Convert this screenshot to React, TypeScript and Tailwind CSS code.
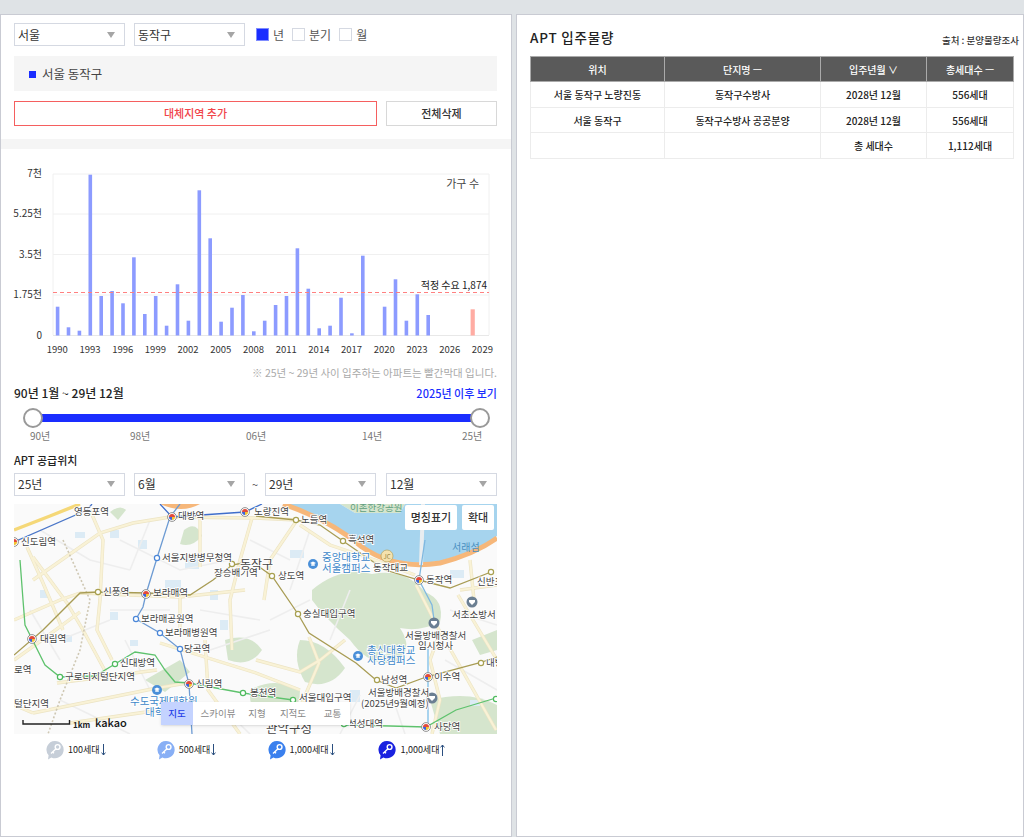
const bars: [number, number][] = [
  [0, 306.7], [1, 327.3], [2, 330.7], [3, 174.7], [4, 296], [5, 291], [6, 303.3], [7, 257.3], [8, 314],
  [9, 296], [10, 325.7], [11, 284.3], [12, 320.7], [13, 190.3], [14, 238.3], [15, 321.7], [16, 307.7],
  [17, 295], [18, 331.3], [19, 320.7], [20, 305], [21, 296], [22, 248.3], [23, 288.7], [24, 328.3],
  [25, 325.7], [26, 297.7], [27, 333.3], [28, 255.7], [30, 306.7], [31, 279.3], [32, 320.7], [33, 294.3],
  [34, 315],
];

const yearLabels = ['1990', '1993', '1996', '1999', '2002', '2005', '2008', '2011', '2014', '2017', '2020', '2023', '2026', '2029'];

const tableRows = [
  ['서울 동작구 노량진동', '동작구수방사', '2028년 12월', '556세대'],
  ['서울 동작구', '동작구수방사 공공분양', '2028년 12월', '556세대'],
  ['', '', '총 세대수', '1,112세대'],
];

// x, y (middle of the text), text; page coordinates, the map svg's viewBox uses the same numbers
const mapLabels: [number, number, string][] = [
  [74, 512, '영등포역'], [21, 542, '신도림역'], [178, 516, '대방역'], [254, 512, '노량진역'],
  [301, 520, '노들역'], [348, 540, '흑석역'], [373, 568, '동작대교'], [426, 580, '동작역'],
  [477, 582, '신반포'], [452, 615, '서초소방서'], [405, 636, '서울방배경찰서'], [418, 646, '임시청사'],
  [434, 677, '이수역'], [381, 680, '남성역'], [368, 693, '서울방배경찰서'], [361, 704, '(2025년9월예정)'],
  [434, 727, '사당역'], [348, 724, '석성대역'], [162, 558, '서울지방병무청역'], [214, 573, '장승배기역'],
  [278, 576, '상도역'], [303, 614, '숭실대입구역'], [103, 592, '신풍역'], [153, 593, '보라매역'],
  [141, 619, '보라매공원역'], [165, 633, '보라매병원역'], [184, 649, '당곡역'], [120, 663, '신대방역'],
  [65, 677, '구로디지털단지역'], [196, 684, '신림역'], [40, 639, '대림역'], [14, 670, '로역'],
  [14, 704, '털단지역'], [250, 693, '봉천역'], [299, 698, '서울대입구역'], [486, 663, '내방'],
];

const mapBlueLabels: [number, number, string][] = [
  [322, 558, '중앙대학교'], [322, 569, '서울캠퍼스'], [367, 651, '총신대학교'], [367, 661, '사당캠퍼스'],
  [130, 702, '수도국제대학원'], [145, 713, '대학'],
];

const stations: [number, number][] = [
  [172, 517], [245, 512], [146, 594], [32, 639], [189, 684], [419, 580], [428, 677], [426, 727], [14, 542],
];

const rings: [number, number, string][] = [
  [296, 520, '#a8a050'], [343, 541, '#a8a050'], [272, 576, '#a8a050'], [298, 614, '#a8a050'], [98, 592, '#a8a050'],
  [232, 564, '#a8a050'], [377, 680, '#a8a050'], [481, 663, '#a8a050'], [491, 572, '#a8a050'],
  [157, 558, '#4a86d8'], [136, 619, '#4a86d8'], [160, 633, '#4a86d8'], [180, 649, '#4a86d8'],
  [115, 664, '#4fbb5f'], [60, 677, '#4fbb5f'], [243, 693, '#4fbb5f'], [293, 700, '#4fbb5f'], [344, 724, '#4fbb5f'], [496, 699, '#4fbb5f'],
];

const mainRoads = [
  'M33 580 L100 533 L133 523 L170 517 L255 518 L297 520',
  'M90 510 L103 540 L100 600 L97 630 L112 660',
  'M33 557 L67 603 L83 630 L110 680',
  'M27 547 L43 583 L63 630',
  'M200 517 L200 567',
  'M80 593 L180 597 L245 590',
  'M180 597 L180 630',
  'M33 713 L157 688 L187 683',
  'M57 683 L157 670',
  'M70 723 L160 710',
  'M160 643 L256 673 L300 690',
  'M14 620 L60 600 L80 593',
  'M14 660 L42 640 L80 612',
  'M252 518 L240 560 L230 600 L232 650',
  'M297 520 L270 560 L264 600',
  'M309 637 L319 663 L299 710 L295 734',
  'M449 647 L496 730',
  'M416 585 L440 632 L430 660 L440 700 L432 734',
  'M458 595 L497 660',
  'M470 560 L474 600',
  'M415 575 L375 560 L330 545 L300 525',
  'M256 660 L300 672 L320 660 L345 640',
  'M14 705 L33 713',
  'M205 640 L208 690 L240 734',
  'M460 590 L497 585',
];

const minorRoads = [
  'M40 530 L90 560 L130 570', 'M120 540 L180 570 L230 560', 'M110 610 L170 610', 'M60 640 L110 620',
  'M125 640 L150 690', 'M200 610 L260 620', 'M210 650 L270 630', 'M270 620 L310 600', 'M250 540 L290 560',
  'M310 530 L290 590', 'M350 590 L330 640', 'M450 610 L497 625', 'M445 660 L497 690', 'M360 695 L340 734',
  'M390 690 L405 734', 'M150 520 L130 570', 'M60 700 L130 734', 'M215 700 L250 734', 'M30 610 L60 660',
];

function SelectBox({ label, className }: { label: string; className: string }) {
  return (
    <div className={`flex h-[23px] items-center justify-between border border-[#d5d9e2] bg-white pl-[3px] pr-[9px] text-xs text-[#333] ${className}`}>
      <span>{label}</span>
      <span className="h-0 w-0 border-x-[4px] border-t-[6px] border-x-transparent border-t-[#a5a5a5]" />
    </div>
  );
}

function CheckItem({ label, checked }: { label: string; checked?: boolean }) {
  return (
    <div className="flex items-center gap-[4px] text-xs text-[#555]">
      {checked ? (
        <span className="h-[13px] w-[13px] border border-[#7f8cff] bg-[#1a2dff]" />
      ) : (
        <span className="h-[13px] w-[13px] border border-[#d5d9e2] bg-white" />
      )}
      <span>{label}</span>
    </div>
  );
}

function Chart() {
  return (
    <svg viewBox="1 150 510 215" className="mt-[1px] block h-[215px] w-[510px]">
      {[174, 214, 254.5, 295].map((y) => (
        <line key={y} x1="53" x2="489" y1={y} y2={y} stroke="#f0f0f0" />
      ))}
      <line x1="53" x2="53" y1="174" y2="335" stroke="#f0f0f0" />
      <line x1="489" x2="489" y1="174" y2="335" stroke="#f0f0f0" />
      <line x1="53" x2="489" y1="335.5" y2="335.5" stroke="#e8e8e8" />
      {bars.map(([i, top]) => (
        <rect key={i} x={55.8 + i * 10.9} y={top} width="3.6" height={335.5 - top} fill="#8c9bff" />
      ))}
      <rect x="470.6" y="309.3" width="4.2" height="26.2" fill="#ffaca3" />
      <line x1="53" x2="489" y1="292.5" y2="292.5" stroke="#ff8080" strokeDasharray="4 3" />
      <g fontSize="10" fill="#333" textAnchor="end">
        <text x="42" y="177">7천</text>
        <text x="42" y="217">5.25천</text>
        <text x="42" y="258">3.5천</text>
        <text x="42" y="298">1.75천</text>
        <text x="42" y="339">0</text>
      </g>
      <g fontSize="9.5" fill="#333" textAnchor="middle">
        {yearLabels.map((year, i) => (
          <text key={year} x={57.3 + i * 32.7} y="353">{year}</text>
        ))}
      </g>
      <text x="479" y="188" fontSize="11" fill="#444" textAnchor="end">가구 수</text>
      <text x="487" y="289" fontSize="10" fill="#222" textAnchor="end">적정 수요 1,874</text>
    </svg>
  );
}

function MapDrawing() {
  return (
    <svg viewBox="14 504 483 230" className="absolute inset-0 h-full w-full" preserveAspectRatio="none">
      <rect x="14" y="504" width="483" height="230" fill="#fafafa" />

      {/* green areas */}
      <g fill="#d5e5cd">
        <path d="M312 590 Q340 566 372 574 Q405 568 425 592 Q445 600 440 622 Q420 632 400 628 Q415 650 395 662 Q370 668 350 640 Q325 618 312 600 Z" />
        <path d="M300 640 Q325 640 345 668 Q330 690 305 682 Q292 660 300 640 Z" />
        <path d="M225 640 Q250 632 262 650 Q250 668 228 660 Z" />
        <path d="M250 690 Q275 676 300 690 Q300 720 270 722 Q248 715 250 690 Z" />
        <path d="M430 700 Q470 690 497 705 L497 734 L440 734 Z" />
        <path d="M184 530 Q196 520 202 536 Q192 548 180 544 Z" />
        <path d="M110 512 Q120 504 126 510 L118 520 Z" />
        <path d="M340 504 L405 504 L400 513 L355 513 Z" />
        <path d="M145 680 L180 660 L190 672 L165 692 Z" />
        <path d="M472 640 L497 630 L497 650 L480 655 Z" />
      </g>

      {/* river */}
      <path d="M283 504 Q330 518 362 545 Q395 568 440 561 Q475 552 497 536 L497 504 L405 504 L400 513 L355 513 L340 504 Z" fill="#a6d4ee" />

      {/* small blue blocks */}
      <g fill="#dcebf5">
        <rect x="75" y="532" width="10" height="6" />
        <rect x="138" y="540" width="9" height="9" />
        <rect x="185" y="555" width="14" height="14" />
        <rect x="165" y="580" width="16" height="10" />
        <rect x="110" y="612" width="8" height="8" />
        <rect x="40" y="590" width="8" height="8" />
        <rect x="290" y="550" width="14" height="8" />
        <rect x="450" y="570" width="14" height="8" />
        <rect x="220" y="620" width="8" height="10" />
        <rect x="350" y="690" width="10" height="12" />
        <rect x="470" y="700" width="10" height="6" />
        <rect x="65" y="635" width="7" height="7" />
        <rect x="130" y="640" width="8" height="6" />
        <rect x="210" y="590" width="8" height="10" />
        <rect x="110" y="530" width="9" height="8" />
      </g>

      <g fill="none" stroke="#eeeeee" strokeWidth="1.6">
        {minorRoads.map((d) => (
          <path key={d} d={d} />
        ))}
      </g>
      <g fill="none" stroke="#ece4c4" strokeWidth="3.4">
        {mainRoads.map((d) => (
          <path key={d} d={d} />
        ))}
      </g>
      <g fill="none" stroke="#f9f2d6" strokeWidth="2.2">
        {mainRoads.map((d) => (
          <path key={d} d={d} />
        ))}
      </g>
      <path d="M63 540 L90 600 L80 650 L60 700 L48 734" fill="none" stroke="#cfc8b4" strokeWidth="1.6" strokeDasharray="2 2" />
      <path d="M14 530 L50 516 L80 504" fill="none" stroke="#f5d878" strokeWidth="3.4" />
      <path d="M283 504 Q330 520 362 547 Q395 570 440 563 Q475 554 497 538" fill="none" stroke="#f6b77a" strokeWidth="5" />
      <path d="M160 504 Q182 514 200 504 Z" fill="#f6b77a" />
      <path d="M423 504 L421 565" fill="none" stroke="#e9edf0" strokeWidth="4" />

      {/* subway lines */}
      <g fill="none" strokeWidth="1.3">
        <path d="M14 542 L87 510 L92 504" stroke="#4a76c8" />
        <path d="M160 504 L172 517 L245 512 L262 504" stroke="#3f6ecb" />
        <path d="M180 504 L170 517 L157 558 L146 594 L143 607 L136 619 L160 633 L180 649 L189 684 L192 734" stroke="#6d9bd3" />
        <path d="M20 560 L23 600 L25 625 L32 639 L45 665 L60 677 L95 676 L115 664 L135 652 L155 655 L165 670 L175 682 L189 683 L243 693 L293 700 M344 725 L390 726 L426 727 L456 710 L496 698" stroke="#5ec26d" />
        <path d="M43 630 L80 593 L98 592 L147 593 L190 595 L213 580 L232 565 L243 563" stroke="#a89c54" />
        <path d="M14 655 L43 630" stroke="#a89c54" />
        <path d="M258 566 L272 576 L298 614 L309 633 L356 663 L376 680 L396 688 L426 677 L479 663 L497 657" stroke="#a89c54" />
        <path d="M256 516 L296 520 L320 525 L343 541 L385 570 L419 580 L450 588 L491 572" stroke="#a89c54" />
        <path d="M419 580 L425 540 M419 580 L432 605 L434 620" stroke="#7fb8e0" />
      </g>
      <path d="M428 647 L428 727" fill="none" stroke="#a8d3ee" strokeWidth="2" />

      {/* station markers */}
      {rings.map(([x, y, c]) => (
        <circle key={`${x}-${y}`} cx={x} cy={y} r="2.6" fill="#fff" stroke={c} strokeWidth="1.2" />
      ))}
      {stations.map(([x, y]) => (
        <g key={`${x}-${y}`}>
          <circle cx={x} cy={y} r="4.4" fill="#fff" stroke="#777" strokeWidth="0.8" />
          <path d={`M${x - 3} ${y} A3 3 0 0 1 ${x + 3} ${y} Z`} fill="#e24a3b" />
          <path d={`M${x - 3} ${y} A3 3 0 0 0 ${x} ${y + 3} L${x} ${y} Z`} fill="#3d63d8" />
          <path d={`M${x} ${y + 3} A3 3 0 0 0 ${x + 3} ${y} L${x} ${y} Z`} fill="#f2c230" />
        </g>
      ))}

      {/* school icons */}
      {[[313, 564], [358, 656], [157, 690]].map(([x, y]) => (
        <g key={x}>
          <circle cx={x} cy={y} r="5" fill="#4a8fd8" />
          <path d={`M${x - 3} ${y - 1} L${x} ${y - 2.5} L${x + 3} ${y - 1} L${x} ${y + 0.5} Z M${x - 1.8} ${y + 0.3} V${y + 1.8} H${x + 1.8} V${y + 0.3}`} fill="#fff" />
        </g>
      ))}
      {/* police / fire icons */}
      {[[472, 602], [434, 623], [432, 698]].map(([x, y]) => (
        <g key={x}>
          <circle cx={x} cy={y} r="5.5" fill="#6b7f92" />
          <path d={`M${x - 3} ${y - 2} H${x + 3} V${y} L${x} ${y + 3} L${x - 3} ${y} Z`} fill="#fff" />
        </g>
      ))}
      <circle cx="387" cy="556" r="6" fill="#f5e2ad" stroke="#b5a25c" strokeWidth="0.7" />
      <text x="387" y="559" fontSize="6" fill="#8f7f40" textAnchor="middle">JC</text>

      {/* labels */}
      <g fontSize="9.5" fill="#444" stroke="#fff" strokeWidth="1.6" paintOrder="stroke">
        {mapLabels.map(([x, y, t]) => (
          <text key={`${t}-${x}`} x={x} y={y + 3}>{t}</text>
        ))}
        <text x="240" y="569" fontSize="12">동작구</text>
      </g>
      <g fontSize="10.5" fill="#3d87c9" stroke="#fff" strokeWidth="1.6" paintOrder="stroke">
        {mapBlueLabels.map(([x, y, t]) => (
          <text key={`${t}-${x}`} x={x} y={y + 3}>{t}</text>
        ))}
      </g>
      <text x="350" y="511" fontSize="9.5" fill="#5f9f80">이촌한강공원</text>
      <text x="452" y="551" fontSize="10" fill="#4a8fc0">서래섬</text>
      <text x="289" y="733" fontSize="12.5" fill="#444" stroke="#fff" strokeWidth="1.6" paintOrder="stroke" textAnchor="middle">관악구청</text>

      {/* scale bar */}
      <path d="M23 720 V724 H69.5 V720" fill="none" stroke="#222" strokeWidth="1.4" />
      <text x="73" y="728" fontSize="8" fontWeight="700" fill="#222">1km</text>
      <text x="95" y="727" fontSize="11" fontWeight="500" fill="#111">kakao</text>
    </svg>
  );
}

function Pin({ color }: { color: string }) {
  return (
    <svg viewBox="0 0 20 20" className="h-[20px] w-[20px] shrink-0">
      <path d="M10 1a8.6 8.6 0 1 1-3.6 16.4L3 19.6l.6-4.4A8.6 8.6 0 0 1 10 1Z" fill={color} />
      <circle cx="12.6" cy="7" r="2.4" fill="none" stroke="#fff" strokeWidth="1.4" />
      <path d="M11 8.8 6 13.6M7.6 12l1.4 1.3" fill="none" stroke="#fff" strokeWidth="1.4" />
    </svg>
  );
}

function LegendItem({ color, label, up }: { color: string; label: string; up?: boolean }) {
  return (
    <div className="flex w-[110.8px] items-center">
      <Pin color={color} />
      <span className="ml-[3px] text-[9px] text-[#222]">{label}</span>
      <svg viewBox="0 0 5 12" className="ml-[1px] h-[12px] w-[5px]">
        {up ? (
          <path d="M2.5 12V1M.6 3.4 2.5 1l1.9 2.4" fill="none" stroke="#2b4f7f" strokeWidth="1" />
        ) : (
          <path d="M2.5 0v11M.6 8.6 2.5 11l1.9-2.4" fill="none" stroke="#2b4f7f" strokeWidth="1" />
        )}
      </svg>
    </div>
  );
}

export default function App() {
  return (
    <div className="flex h-[837px] w-[1024px] gap-[4px] overflow-hidden bg-[#dfe3e6] pt-[14px] [font-family:'Noto_Sans_CJK_KR','Noto_Sans',sans-serif]">
      {/* left panel */}
      <div className="h-full w-[512px] shrink-0 border border-[#c9cbd3] bg-white">
        <div className="flex items-center px-[13px] pt-[8px]">
          <SelectBox label="서울" className="w-[111px]" />
          <SelectBox label="동작구" className="ml-[9px] w-[111px]" />
          <div className="ml-[11px] flex items-center gap-[8px]">
            <CheckItem label="년" checked />
            <CheckItem label="분기" />
            <CheckItem label="월" />
          </div>
        </div>

        <div className="mx-[13px] mt-[10px] flex h-[35px] w-[483px] items-center gap-[6px] bg-[#f5f5f5] pl-[15px] pt-[2px] text-[12.5px] text-[#444]">
          <span className="h-[7px] w-[7px] bg-[#1a2dff]" />
          <span>서울 동작구</span>
        </div>

        <div className="mx-[13px] mt-[10px] flex w-[483px] gap-[9px]">
          <button className="h-[25px] w-[363px] border border-[#f55f5f] text-[11px] font-medium text-[#f0454a]">대체지역 추가</button>
          <button className="h-[25px] w-[111px] border border-[#d8d8d8] text-[11px] font-medium text-[#333]">전체삭제</button>
        </div>

        <div className="mt-[13px] h-[10px] bg-[#f5f5f5]" />

        <Chart />

        <p className="mr-[14px] mt-[1px] text-right text-[10.5px] leading-[14px] text-[#aaa]">※ 25년 ~ 29년 사이 입주하는 아파트는 빨간막대 입니다.</p>

        <div className="mx-[13px] mt-[5px] flex w-[483px] items-center justify-between">
          <span className="text-xs font-medium text-[#222]">90년 1월 ~ 29년 12월</span>
          <span className="text-[11px] font-medium text-[#1a2dff]">2025년 이후 보기</span>
        </div>

        <div className="relative ml-[32px] mt-[6px] h-[21px] w-[447px]">
          <div className="absolute left-0 right-0 top-[6px] h-[8px] bg-[#1a2dff]" />
          <span className="absolute left-[-10px] top-0 h-[20px] w-[20px] rounded-full border-2 border-[#999] bg-white" />
          <span className="absolute right-[-10px] top-0 h-[20px] w-[20px] rounded-full border-2 border-[#999] bg-white" />
        </div>
        <div className="relative mx-[13px] h-[17px] text-[10px] leading-[13px] text-[#777]">
          <span className="absolute left-[16px]">90년</span>
          <span className="absolute left-[116px]">98년</span>
          <span className="absolute left-[232px]">06년</span>
          <span className="absolute left-[348px]">14년</span>
          <span className="absolute left-[448px]">25년</span>
        </div>

        <div className="mx-[13px] mt-[6px] text-[11px] font-medium leading-[16px] text-[#222]">APT 공급위치</div>

        <div className="mx-[13px] mt-[5px] flex w-[483px] items-center">
          <SelectBox label="25년" className="w-[111px]" />
          <SelectBox label="6월" className="ml-[9px] w-[111px]" />
          <span className="w-[20px] text-center text-[11px] text-[#555]">~</span>
          <SelectBox label="29년" className="w-[111px]" />
          <SelectBox label="12월" className="ml-[10px] w-[111px]" />
        </div>

        <div className="relative mx-[13px] mt-[8px] h-[230px] w-[483px] overflow-hidden">
          <MapDrawing />
          <div className="absolute right-[3px] top-[1px] flex gap-[5px] text-[11px] font-medium text-[#333]">
            <span className="flex h-[25px] w-[52px] items-center justify-center rounded-[2px] bg-white">명칭표기</span>
            <span className="flex h-[25px] w-[32px] items-center justify-center rounded-[2px] bg-white">확대</span>
          </div>
          <div className="absolute left-[147px] top-[198px] flex h-[23px] w-[189px] items-center bg-white text-[9.5px] text-[#888] shadow-sm">
            <span className="flex h-full w-[32px] items-center justify-center bg-[#c4d3ff] font-medium text-[#2440e8]">지도</span>
            <span className="w-[50px] text-center">스카이뷰</span>
            <span className="w-[28px] text-center">지형</span>
            <span className="w-[44px] text-center">지적도</span>
            <span className="w-[35px] text-center">교통</span>
          </div>
        </div>

        <div className="ml-[44px] mt-[6px] flex">
          <LegendItem color="#c6ced8" label="100세대" />
          <LegendItem color="#88aff5" label="500세대" />
          <LegendItem color="#3a80ee" label="1,000세대" />
          <LegendItem color="#1a22e0" label="1,000세대" up />
        </div>
      </div>

      {/* right panel */}
      <div className="h-full flex-1 border border-[#c9cbd3] bg-white pl-[13px]">
        <div className="flex items-end justify-between pr-[4px] pt-[12px]">
          <h2 className="text-[13.5px] font-medium leading-[20px] tracking-[0.8px] text-[#222]">APT 입주물량</h2>
          <span className="text-[9.5px] font-medium leading-[14px] text-[#333]">출처 : 분양물량조사</span>
        </div>
        <table className="mt-[9px] w-[483px] table-fixed border-collapse text-[10px] font-medium text-[#222]">
          <thead>
            <tr className="h-[25px] bg-[#5a5a5a] text-white">
              <th className="w-[134px] border border-[#aaa] font-medium">위치</th>
              <th className="w-[156px] border border-[#aaa] font-medium">단지명 ㅡ</th>
              <th className="w-[106px] border border-[#aaa] font-medium">입주년월 ∨</th>
              <th className="w-[87px] border border-[#aaa] font-medium">총세대수 ㅡ</th>
            </tr>
          </thead>
          <tbody>
            {tableRows.map((row, i) => (
              <tr key={i} className="h-[25.5px]">
                {row.map((cell, j) => (
                  <td key={j} className="border border-[#ececec] pt-[1px] text-center">{cell}</td>
                ))}
              </tr>
            ))}
          </tbody>
        </table>
      </div>
    </div>
  );
}
